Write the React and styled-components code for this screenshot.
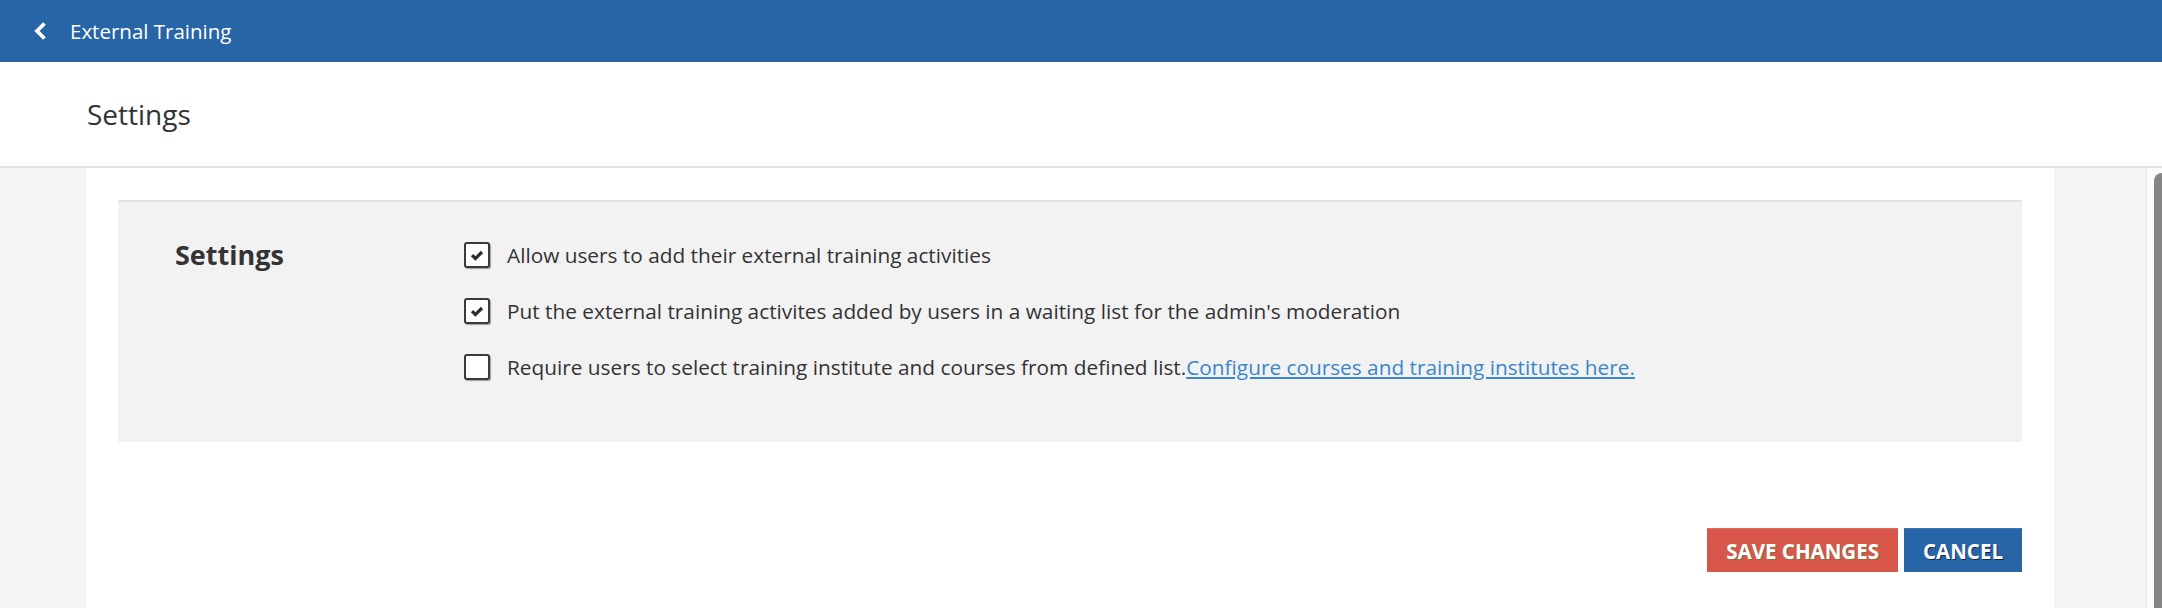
import React from 'react'
import styled, { createGlobalStyle } from 'styled-components'

const GlobalStyle = createGlobalStyle`
  html, body {
    margin: 0;
    padding: 0;
    height: 100%;
    overflow: hidden;
  }
  body {
    font-family: "Open Sans", "Noto Sans", sans-serif;
    color: #333;
    background: #f4f4f4;
  }
`

const Page = styled.div`
  display: flex;
  flex-direction: column;
  height: 100vh;
`

const TopBar = styled.div`
  height: 62px;
  flex: none;
  background: #2865a6;
  color: #fff;
  display: flex;
  align-items: center;
  padding-left: 33px;
  font-size: 20.5px;
  > svg {
    margin-right: 23px;
  }
`

const Header = styled.div`
  height: 104px;
  flex: none;
  background: #fff;
  border-bottom: 2px solid #e2e2e2;
  display: flex;
  align-items: center;
  padding-left: 87px;
  font-size: 28px;
  color: #333;
`

const BodyRow = styled.div`
  flex: 1;
  display: flex;
  min-height: 0;
`

const Body = styled.div`
  flex: 1;
  overflow: hidden;
  background: #f4f4f4;
`

const ScrollTrack = styled.div`
  width: 16px;
  flex: none;
  background: #fafafa;
  border-left: 1px solid #e6e6e6;
  padding: 5px 0 0 7px;
  box-sizing: border-box;
  display: flex;
`

const ScrollThumb = styled.div`
  flex: 1;
  background: #858585;
  border-radius: 8px 0 0 0;
`

const Panel = styled.div`
  margin-left: 86px;
  width: 1968px;
  min-height: 470px;
  background: #fff;
  padding: 32px 32px 0;
  box-sizing: border-box;
`

const Section = styled.div`
  background: #f2f2f2;
  border-top: 2px solid #e4e4e4;
  display: flex;
  padding: 40px 0 62px 57px;
`

const SectionLabel = styled.div`
  width: 289px;
  font-size: 27px;
  font-weight: 700;
  line-height: 26px;
  color: #333;
`

const Options = styled.div`
  display: flex;
  flex-direction: column;
  gap: 30px;
`

const Option = styled.label`
  display: flex;
  align-items: center;
  gap: 17px;
  font-size: 20.8px;
  color: #333;
  line-height: 26px;
`

const Box = styled.span`
  width: 26px;
  height: 26px;
  box-sizing: border-box;
  border: 2px solid #3a3a3a;
  border-radius: 3px;
  background: #fff;
  box-shadow: 1px 1px 1px rgba(0, 0, 0, 0.35);
  display: flex;
  align-items: center;
  justify-content: center;
  flex: none;
`

const Link = styled.a`
  color: #3a87c8;
  text-decoration: underline;
  cursor: pointer;
`

const Actions = styled.div`
  display: flex;
  justify-content: flex-end;
  gap: 6px;
  margin-top: 86px;
`

const Button = styled.button`
  height: 44px;
  padding: 0 19px;
  border: none;
  border-top: 1px solid ${p => (p.$primary ? '#e06b5f' : '#3a76b5')};
  background: ${p => (p.$primary ? '#d9574a' : '#2865a6')};
  color: #fff;
  font-family: "Open Sans", sans-serif;
  font-weight: 700;
  font-size: 20.5px;
  text-transform: uppercase;
  text-shadow: 1px 1px 0 ${p => (p.$primary ? 'rgba(60,140,60,0.6)' : 'rgba(0,0,0,0.6)')};
  cursor: pointer;
`

const Check = () => (
  <svg width="14" height="11" viewBox="0 0 14 11">
    <polyline points="2,5.2 5.4,8.6 12,2" fill="none" stroke="#2b2b2b" strokeWidth="3.2" />
  </svg>
)

const Checkbox = ({ checked }) => <Box>{checked && <Check />}</Box>

export default function App() {
  return (
    <>
      <GlobalStyle />
      <Page>
        <TopBar>
          <svg width="14" height="20" viewBox="0 0 14 20">
            <polyline points="11.5,2.5 4,10 11.5,17.5" fill="none" stroke="#fff" strokeWidth="3.8" />
          </svg>
          External Training
        </TopBar>
        <Header>Settings</Header>
        <BodyRow>
          <Body>
            <Panel>
              <Section>
                <SectionLabel>Settings</SectionLabel>
                <Options>
                  <Option>
                    <Checkbox checked />
                    Allow users to add their external training activities
                  </Option>
                  <Option>
                    <Checkbox checked />
                    Put the external training activites added by users in a waiting list for the admin's moderation
                  </Option>
                  <Option>
                    <Checkbox />
                    <span>
                      Require users to select training institute and courses from defined list.
                      <Link>Configure courses and training institutes here.</Link>
                    </span>
                  </Option>
                </Options>
              </Section>
              <Actions>
                <Button $primary>Save Changes</Button>
                <Button>Cancel</Button>
              </Actions>
            </Panel>
          </Body>
          <ScrollTrack>
            <ScrollThumb />
          </ScrollTrack>
        </BodyRow>
      </Page>
    </>
  )
}
